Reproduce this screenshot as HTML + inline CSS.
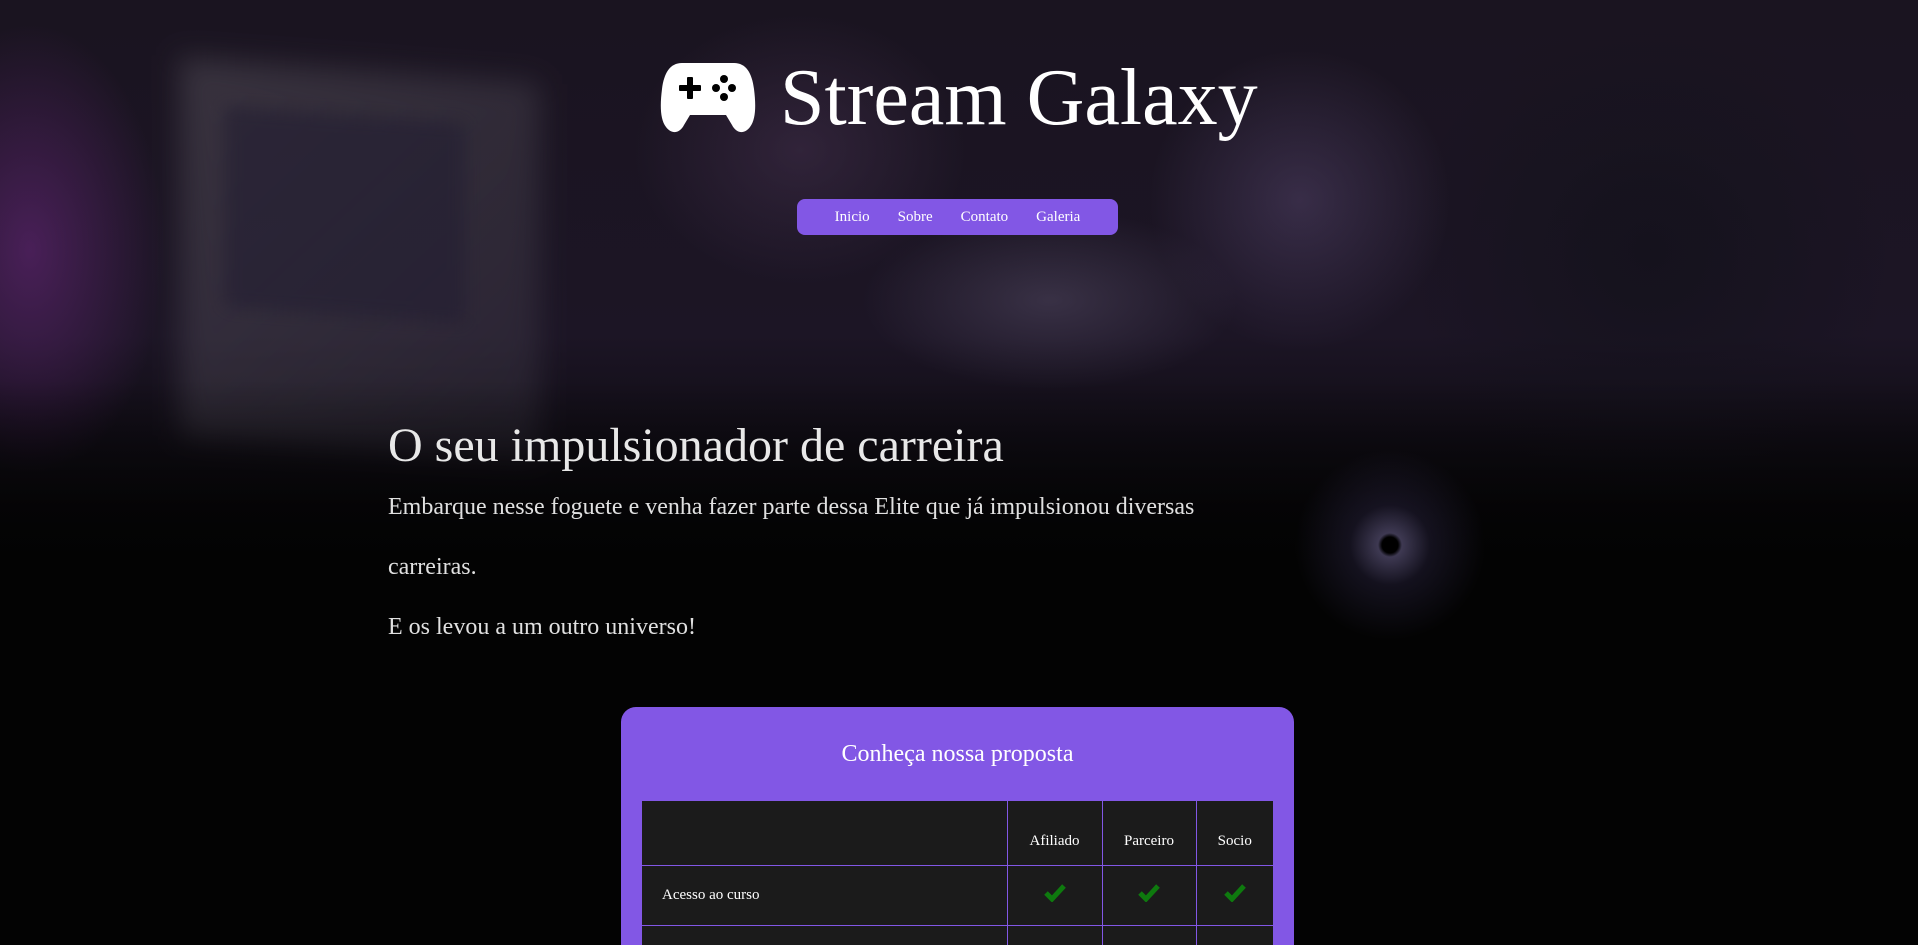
<!DOCTYPE html>
<html><head><meta charset="utf-8"><style>
*{margin:0;padding:0;box-sizing:border-box}
html{width:1918px;height:945px;overflow:hidden}
body{width:1918px;height:945px;overflow:hidden;background:#030303;font-family:"Liberation Serif",serif;color:#fff;position:relative}
.bg{position:absolute;left:0;top:0;width:1918px;height:560px;
background:
radial-gradient(ellipse 180px 300px at 30px 250px,rgba(110,40,130,.55),transparent 75%),
radial-gradient(ellipse 200px 200px at 1300px 200px,rgba(110,90,140,.35),transparent 75%),
radial-gradient(ellipse 250px 120px at 1050px 300px,rgba(110,100,130,.35),transparent 75%),
radial-gradient(ellipse 220px 180px at 800px 150px,rgba(70,50,80,.5),transparent 75%),
radial-gradient(ellipse 300px 300px at 1650px 250px,rgba(20,18,28,.9),transparent 80%),
linear-gradient(#1a1420,#1c1525 60%,#030303)}
.mon{position:absolute;left:180px;top:70px;width:360px;height:380px;background:linear-gradient(135deg,rgba(100,95,105,.4),rgba(70,65,80,.3));filter:blur(14px);transform:skewY(4deg)}
.scr{position:absolute;left:225px;top:115px;width:240px;height:200px;background:rgba(35,30,50,.6);filter:blur(8px);transform:skewY(4deg)}
.fade{position:absolute;left:0;top:380px;width:1918px;height:200px;background:linear-gradient(transparent,#030303)}
.gal{position:absolute;left:1290px;top:450px;width:200px;height:190px;border-radius:50%;
background:radial-gradient(circle at 50% 50%,#000 0 8px,rgba(120,110,160,.5) 12px,rgba(70,60,110,.25) 40px,transparent 95px)}
.logo{position:absolute;left:660px;top:58px;display:flex;align-items:center}
.logo h1{font-weight:normal;font-size:80px;margin-left:24px;line-height:1}
nav{position:absolute;left:797px;top:199px;width:321px;height:36px;background:#8257e5;border-radius:8px;display:flex;justify-content:center;align-items:center;gap:28px;font-size:15px}
h2{position:absolute;left:388px;top:418px;font-weight:normal;font-size:48px;color:#e8e8e8}
.p{position:absolute;left:388px;top:477px;width:880px;font-size:24px;line-height:60px;color:#e0e0e0}
.card{position:absolute;left:621px;top:707px;width:673px;height:238px;background:#8257e5;border-radius:15px 15px 0 0;overflow:hidden}
.card h3{font-weight:normal;font-size:24px;text-align:center;margin-top:34px}
table{position:absolute;left:21px;top:94px;width:631px;border-collapse:collapse;background:#1b1b1b;font-size:15px}
td{border:1px solid #8257e5;text-align:center}
tr:first-child td{border-top:none;height:64px;padding-top:18px}
td:first-child{border-left:none;text-align:left;padding-left:20px}
td:last-child{border-right:none}
</style></head><body>
<div class="bg"></div><div class="mon"></div><div class="scr"></div><div class="fade"></div><div class="gal"></div>
<div class="logo">
<svg width="96" height="74" viewBox="0 0 96 74"><path fill="#fff" d="M22 2h52c12 0 18 10 20 26 2 16 2 30-4 38-6 8-14 6-18-2l-6-10H30l-6 10c-4 8-12 10-18 2C0 58 0 44 2 28 4 12 10 2 22 2z"/><g fill="#000"><rect x="19" y="24" width="22" height="6" rx="1"/><rect x="27" y="16" width="6" height="22" rx="1"/><circle cx="64" cy="18" r="4"/><circle cx="56" cy="27" r="4"/><circle cx="72" cy="27" r="4"/><circle cx="64" cy="36" r="4"/></g></svg>
<h1>Stream Galaxy</h1></div>
<nav><span>Inicio</span><span>Sobre</span><span>Contato</span><span>Galeria</span></nav>
<h2>O seu impulsionador de carreira</h2>
<div class="p">Embarque nesse foguete e venha fazer parte dessa Elite que já impulsionou diversas carreiras.<br>E os levou a um outro universo!</div>
<div class="card"><h3>Conheça nossa proposta</h3>
<table>
<tr><td style="width:365px"></td><td style="width:95px">Afiliado</td><td style="width:94px">Parceiro</td><td>Socio</td></tr>
<tr style="height:60px"><td>Acesso ao curso</td>
<td><svg width="22" height="18" viewBox="0 0 22 18"><path d="M2 9l6 6L20 2" fill="none" stroke="#0e7a0e" stroke-width="5"/></svg></td>
<td><svg width="22" height="18" viewBox="0 0 22 18"><path d="M2 9l6 6L20 2" fill="none" stroke="#0e7a0e" stroke-width="5"/></svg></td>
<td><svg width="22" height="18" viewBox="0 0 22 18"><path d="M2 9l6 6L20 2" fill="none" stroke="#0e7a0e" stroke-width="5"/></svg></td></tr>
<tr style="height:60px"><td></td><td></td><td></td><td></td></tr>
</table></div>
</body></html>
